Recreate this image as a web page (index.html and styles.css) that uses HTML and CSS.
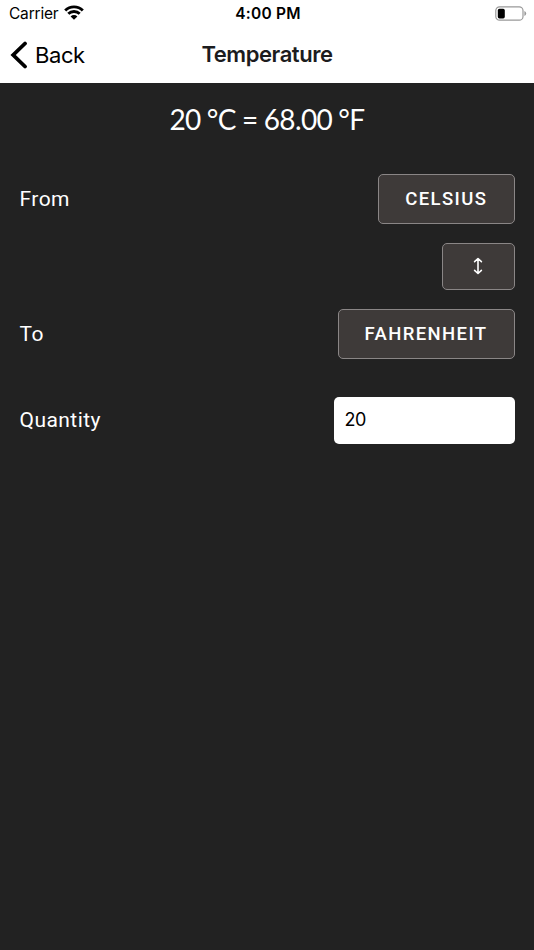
FILE: index.html
```html
<!DOCTYPE html>
<html lang="en">
<head>
  <meta charset="UTF-8">
  <meta name="viewport" content="width=device-width, initial-scale=1.0">
  <title>Temperature</title>
  <link rel="stylesheet" href="styles.css">
</head>
<body>
  <header>
    <div class="status-bar">
      <div class="carrier">
        <span class="carrier-name">Carrier</span>
        <svg class="wifi" width="20" height="15" viewBox="0 0 20 15">
          <path d="M1.2 5.5a12.5 12.5 0 0 1 17.6 0M4.3 8.8a8.1 8.1 0 0 1 11.4 0" fill="none" stroke="#000" stroke-width="2.9"/>
          <path d="M10 14.8L6.6 11.4a4.8 4.8 0 0 1 6.8 0z"/>
        </svg>
      </div>
      <span class="time">4:00 PM</span>
      <svg class="battery" width="32" height="15" viewBox="0 0 32 15">
        <rect x="0.8" y="0.8" width="27.2" height="13.4" rx="3.8" fill="none" stroke="#999" stroke-width="1.2"/>
        <rect x="2.8" y="2.8" width="7" height="9.6" rx="1.6"/>
        <path d="M29.4 5v5q1.8-.8 1.8-2.5T29.4 5z" fill="#999"/>
      </svg>
    </div>
    <nav class="nav-bar">
      <a class="back" href="#">
        <svg width="18" height="28" viewBox="0 0 18 28">
          <path d="M15 2.5L3.2 14 15 25.5" fill="none" stroke="#000" stroke-width="3.8" stroke-linecap="round"/>
        </svg>
        <span class="back-label">Back</span>
      </a>
      <h1>Temperature</h1>
    </nav>
  </header>

  <main>
    <p class="result">20 °C = 68.00 °F</p>
    <div class="row">
      <span class="label">From</span>
      <button class="btn btn-from">CELSIUS</button>
    </div>
    <div class="row row-swap">
      <button class="btn btn-swap" aria-label="Swap units">
        <svg width="10" height="18" viewBox="0 0 10 18">
          <path d="M5 1.7v14.6M1.6 4.6L5 1.5 8.4 4.6M1.6 13.4L5 16.5 8.4 13.4" fill="none" stroke="#fff" stroke-width="1.6" stroke-linecap="round" stroke-linejoin="round"/>
        </svg>
      </button>
    </div>
    <div class="row">
      <span class="label">To</span>
      <button class="btn btn-to">FAHRENHEIT</button>
    </div>
    <div class="row row-quantity">
      <label class="label" for="quantity">Quantity</label>
      <input id="quantity" type="text" value="20">
    </div>
  </main>
</body>
</html>
```
FILE: styles.css
```css
* {
  box-sizing: border-box;
}

body {
  margin: 0;
  min-height: 950px;
  background-color: #222;
  font-family: Roboto, sans-serif;
  color: #fff;
}

header {
  height: 83px;
  background-color: #fff;
  color: #000;
  font-family: Inter, sans-serif;
}

.status-bar {
  display: grid;
  grid-template-columns: 1fr auto 1fr;
  align-items: center;
  height: 27px;
  padding: 0 7px 0 9px;
}

.carrier {
  display: flex;
  align-items: center;
  gap: 6px;
}

.carrier-name {
  font-size: 15.5px;
  letter-spacing: -0.2px;
}

.wifi {
  margin-top: -2px;
}

.time {
  font-size: 15.5px;
  font-weight: 600;
  letter-spacing: 0.2px;
}

.battery {
  justify-self: end;
}

.nav-bar {
  display: grid;
  grid-template-columns: 1fr auto 1fr;
  align-items: center;
  height: 56px;
  padding: 0 10px;
}

.back {
  display: flex;
  align-items: center;
  gap: 7px;
  color: #000;
  font-size: 22px;
  letter-spacing: -0.4px;
  text-decoration: none;
}

h1 {
  margin: -2px 0 0;
  font-size: 22px;
  font-weight: 600;
  letter-spacing: -0.45px;
  color: #1c1c1e;
}

main {
  padding: 19px 19.5px 0;
}

.result {
  margin: 0 0 38px;
  font-family: Lato, sans-serif;
  font-size: 28px;
  line-height: 34px;
  letter-spacing: -0.6px;
  word-spacing: -0.5px;
  text-align: center;
}

.row {
  display: flex;
  align-items: center;
  justify-content: space-between;
  margin-bottom: 19.5px;
}

.row-swap {
  justify-content: flex-end;
}

.label {
  font-size: 21px;
  letter-spacing: 0.45px;
}

.btn {
  display: flex;
  align-items: center;
  justify-content: center;
  height: 49.5px;
  padding: 0;
  border: 1px solid #8a8686;
  border-radius: 5px;
  background-color: #3e3a39;
  color: #fff;
  font-family: Roboto, sans-serif;
  font-size: 18.5px;
  font-weight: 500;
  letter-spacing: 1.4px;
}

.btn-from {
  width: 136.5px;
}

.btn-swap {
  width: 72.5px;
  height: 46.5px;
}

.btn-to {
  width: 177px;
}

.row-quantity {
  margin-top: 38.5px;
}

input {
  width: 181px;
  height: 46.5px;
  padding: 0 11px 1px;
  border: none;
  border-radius: 5px;
  background-color: #fff;
  color: #000;
  font-family: Inter, sans-serif;
  font-size: 18px;
  letter-spacing: -0.5px;
}
```
